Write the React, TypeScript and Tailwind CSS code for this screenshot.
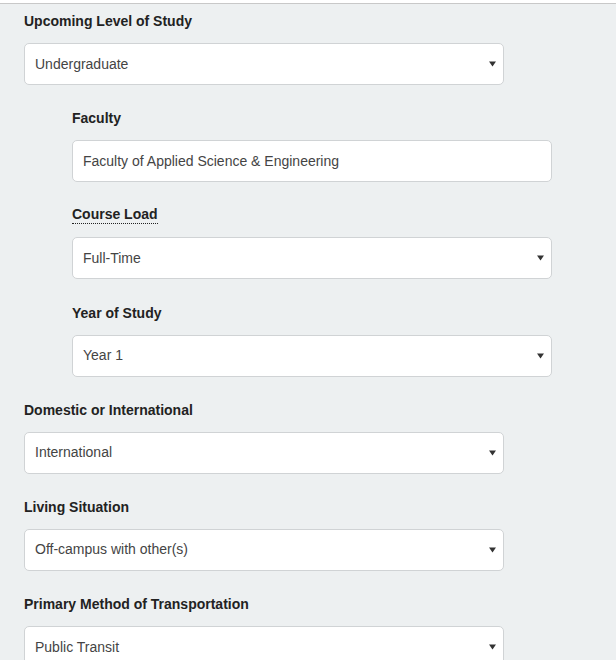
import React from 'react'

type Field = {
  label: string
  value: string
  nested?: boolean
  select?: boolean
  abbr?: boolean
}

const fields: Field[] = [
  { label: 'Upcoming Level of Study', value: 'Undergraduate', select: true },
  { label: 'Faculty', value: 'Faculty of Applied Science & Engineering', nested: true },
  { label: 'Course Load', value: 'Full-Time', nested: true, select: true, abbr: true },
  { label: 'Year of Study', value: 'Year 1', nested: true, select: true },
  { label: 'Domestic or International', value: 'International', select: true },
  { label: 'Living Situation', value: 'Off-campus with other(s)', select: true },
  { label: 'Primary Method of Transportation', value: 'Public Transit', select: true },
]

function Caret() {
  return (
    <svg width="7" height="6" viewBox="0 0 7 6" className="shrink-0">
      <path d="M0 0.5 H7 L3.5 5.5 Z" fill="#333" />
    </svg>
  )
}

export default function App() {
  return (
    <div className="w-[616px] h-[660px] overflow-hidden bg-white font-['Liberation_Sans',Arial,sans-serif]">
      <div className="h-[3px] bg-white" />
      <div className="h-px bg-[#c8c8c8]" />
      <div className="bg-[#edf0f1] pt-[7px] pb-10">
        {fields.map((f) => (
          <div key={f.label} className={f.nested ? 'pl-[72px]' : 'pl-6'}>
            <div className="h-5 mb-[12px] flex items-center">
              <span
                className={`text-[14px] font-bold text-[#222] leading-5 ${
                  f.abbr ? 'border-b border-dotted border-[#222] leading-[17px]' : ''
                }`}
              >
                {f.label}
              </span>
            </div>
            <div className="w-[480px] h-[42px] mb-[23.2px] bg-white border border-[#d0d3d5] rounded-[5px] flex items-center justify-between pl-[10px] pr-[7px]">
              <span className="text-[14px] text-[#444]">{f.value}</span>
              {f.select && <Caret />}
            </div>
          </div>
        ))}
      </div>
    </div>
  )
}
